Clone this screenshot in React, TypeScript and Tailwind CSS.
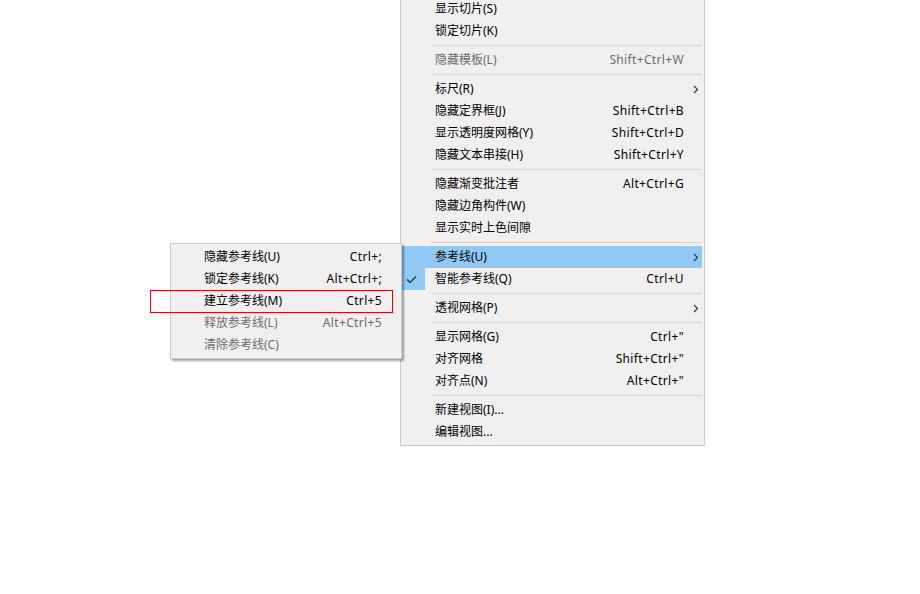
import React from "react";

type Item =
  | { sep: true }
  | {
      sep?: false;
      label: string;
      shortcut?: string;
      disabled?: boolean;
      submenu?: boolean;
      active?: boolean;
      checked?: boolean;
    };

const mainItems: Item[] = [
  { label: "显示切片(S)" },
  { label: "锁定切片(K)" },
  { sep: true },
  { label: "隐藏模板(L)", shortcut: "Shift+Ctrl+W", disabled: true },
  { sep: true },
  { label: "标尺(R)", submenu: true },
  { label: "隐藏定界框(J)", shortcut: "Shift+Ctrl+B" },
  { label: "显示透明度网格(Y)", shortcut: "Shift+Ctrl+D" },
  { label: "隐藏文本串接(H)", shortcut: "Shift+Ctrl+Y" },
  { sep: true },
  { label: "隐藏渐变批注者", shortcut: "Alt+Ctrl+G" },
  { label: "隐藏边角构件(W)" },
  { label: "显示实时上色间隙" },
  { sep: true },
  { label: "参考线(U)", submenu: true, active: true },
  { label: "智能参考线(Q)", shortcut: "Ctrl+U", checked: true },
  { sep: true },
  { label: "透视网格(P)", submenu: true },
  { sep: true },
  { label: "显示网格(G)", shortcut: 'Ctrl+"' },
  { label: "对齐网格", shortcut: 'Shift+Ctrl+"' },
  { label: "对齐点(N)", shortcut: 'Alt+Ctrl+"' },
  { sep: true },
  { label: "新建视图(I)..." },
  { label: "编辑视图..." },
];

const guideItems = [
  { label: "隐藏参考线(U)", shortcut: "Ctrl+;" },
  { label: "锁定参考线(K)", shortcut: "Alt+Ctrl+;" },
  { label: "建立参考线(M)", shortcut: "Ctrl+5" },
  { label: "释放参考线(L)", shortcut: "Alt+Ctrl+5", disabled: true },
  { label: "清除参考线(C)", disabled: true },
];

function Chevron() {
  return (
    <svg width="6" height="9" viewBox="0 0 6 9" className="text-[#333]">
      <polyline points="1,1 4.5,4.5 1,8" fill="none" stroke="currentColor" strokeWidth="1.1" />
    </svg>
  );
}

function Check() {
  return (
    <svg width="11" height="9" viewBox="0 0 11 9" className="text-[#333]">
      <polyline points="1,4.5 4,7.5 10,1.5" fill="none" stroke="currentColor" strokeWidth="1.3" />
    </svg>
  );
}

function MainRow({ item }: { item: Exclude<Item, { sep: true }> }) {
  return (
    <div
      className={`flex h-[22px] items-center ${item.active ? "bg-[#91c9f7]" : ""} ${
        item.disabled ? "text-[#6d6d6d]" : "text-black"
      }`}
    >
      <div
        className={`flex h-full w-[24px] items-center justify-center pr-[3px] ${
          item.checked ? "bg-[#91c9f7]" : ""
        }`}
      >
        {item.checked && <Check />}
      </div>
      <span className="ml-[10px] flex-1">{item.label}</span>
      {item.shortcut && <span className="tracking-[0.35px]">{item.shortcut}</span>}
      <div className="flex w-[18px] items-center justify-end pr-[3px]">
        {item.submenu && <Chevron />}
      </div>
    </div>
  );
}

export default function App() {
  return (
    <div
      className="relative h-[594px] w-[920px] overflow-hidden bg-white text-[12px] leading-none"
      style={{ fontFamily: '"Noto Sans", "Noto Sans CJK SC", sans-serif' }}
    >
      <div className="ml-[400px] mt-[-5px] w-[305px] border border-[#cccccc] bg-[#f0f0f0] py-[2px] pr-[2px]">
        {mainItems.map((item, i) =>
          item.sep ? (
            <div key={i} className="flex h-[7px] items-center pl-[30px]">
              <div className="h-px w-full bg-[#d7d7d7]" />
            </div>
          ) : (
            <MainRow key={i} item={item} />
          ),
        )}
      </div>

      {/* flyout submenu */}
      <div className="absolute left-[170px] top-[243px] w-[232px] border border-[#cccccc] bg-[#f0f0f0] py-[2px] shadow-[2px_2px_2px_rgba(0,0,0,0.35)]">
        {guideItems.map((item) => (
          <div
            key={item.label}
            className={`flex h-[22px] items-center pl-[33px] pr-[19px] ${
              item.disabled ? "text-[#6d6d6d]" : "text-black"
            }`}
          >
            <span className="flex-1">{item.label}</span>
            {item.shortcut && <span className="tracking-[0.35px]">{item.shortcut}</span>}
          </div>
        ))}
      </div>

      {/* annotation box */}
      <div className="absolute left-[150px] top-[290px] h-[23px] w-[243px] border border-[#e60000]" />
    </div>
  );
}
